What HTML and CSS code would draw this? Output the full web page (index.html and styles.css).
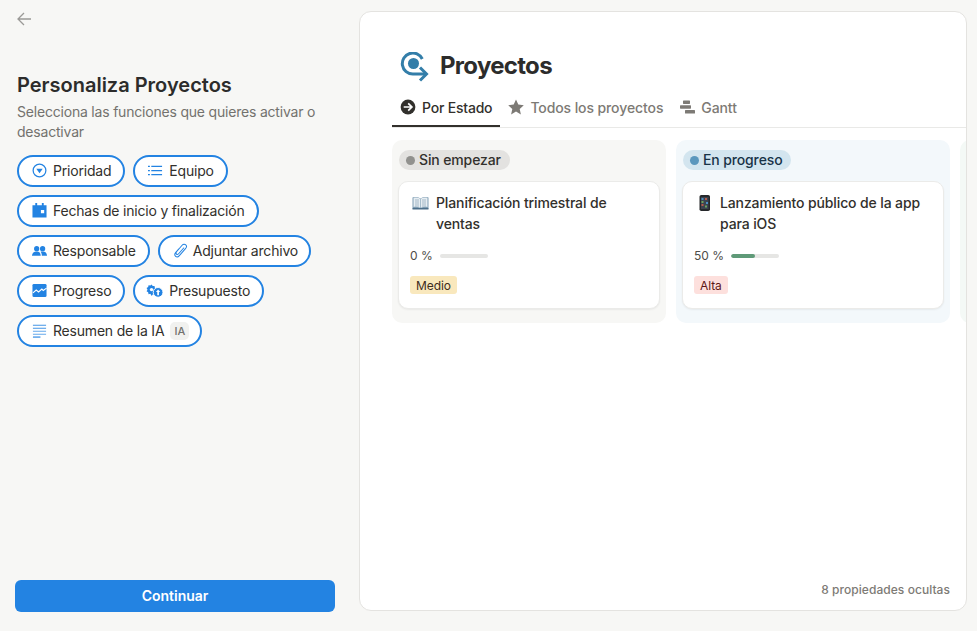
FILE: index.html
```html
<!DOCTYPE html>
<html lang="es">
<head>
<meta charset="utf-8">
<title>Personaliza Proyectos</title>
<link rel="stylesheet" href="styles.css">
</head>
<body>
<div class="app">
  <aside class="side">
    <button class="back" aria-label="Atrás">
      <svg width="16" height="16" viewBox="0 0 16 16" fill="none" stroke="#9b9a97" stroke-width="1.3"><path d="M15 8H2M8 2 2 8l6 6"/></svg>
    </button>
    <h1 class="side-title">Personaliza Proyectos</h1>
    <p class="side-sub">Selecciona las funciones que quieres activar o desactivar</p>
    <div class="chips">
      <span class="chip">
        <svg class="ic" viewBox="0 0 16 16"><circle cx="8" cy="8" r="6.8" fill="none" stroke="#2383e2" stroke-width="1.3"/><path d="M4.600 6h6.800L8 10.800z" fill="#2383e2"/></svg>
        Prioridad</span>
      <span class="chip">
        <svg class="ic" viewBox="0 0 16 16" fill="#2383e2"><path d="M0 3h2v1.300H0zM0 7.400h2v1.300H0zM0 11.800h2v1.300H0zM3.500 3H15v1.300H3.500zM3.500 7.400H15v1.300H3.500zM3.500 11.800H15v1.300H3.500z"/></svg>
        Equipo</span>
      <span class="chip">
        <svg class="ic" viewBox="0 0 16 16"><path fill="#2383e2" fill-rule="evenodd" d="M.5 2.500h3V0h2v2.500h5V0h2v2.500h3V15.500H.5zM9.500 7.500v3.500H13V7.500z"/></svg>
        Fechas de inicio y finalización</span>
      <span class="chip">
        <svg class="ic" viewBox="0 0 16 16" fill="#2383e2"><circle cx="5" cy="6" r="2.800"/><circle cx="11.300" cy="6" r="2.800"/><path d="M0 13.500c0-2.900 2.200-4.500 5-4.500s4.300 1.600 4.300 4.500zM10.500 13.500c0-1.700-.4-3.100-1.400-4.100.8-.3 1.500-.4 2.400-.4 2.600 0 4.500 1.600 4.500 4.500z"/></svg>
        Responsable</span>
      <span class="chip chip-tight">
        <svg class="ic" viewBox="0 0 16 16" fill="none" stroke="#2383e2" stroke-width="1.100" stroke-linecap="round"><path d="M6 6.500 3 10c-1.700 2-1 3.500-.2 4.200s2.500 1 4-.7l6.500-7.500c1.500-1.700 1.200-3.300.3-4.100s-2.600-1-3.900.5L3.800 9.300c-.9 1.100-.6 2-.1 2.500s1.500.6 2.300-.3l5.400-6.200"/></svg>
        Adjuntar archivo</span>
      <span class="chip">
        <svg class="ic" viewBox="0 0 16 16"><rect x=".5" y="1" width="15" height="14" rx="1.500" fill="#2383e2"/><path d="M1 10.500 4.500 7.500l2.500 2L10.500 6.500l1.500 1.500 3.500-2.500" fill="none" stroke="#fff" stroke-width="1.200"/></svg>
        Progreso</span>
      <span class="chip">
        <svg class="ic ic-wide" viewBox="0 0 18 16"><path d="m5.500 1.500 1 1.700 2-.1.300 1.900 1.700.9-.8 1.800.8 1.800-1.700.9-.3 1.900-2-.1-1 1.700L4 11.500l-1.900.4-.4-2L0 8.800l1-1.700-1-1.700 1.700-1.100.4-2L4 2.700z" fill="#2383e2"/><circle cx="5.300" cy="7" r="1.800" fill="#fff"/><circle cx="12.300" cy="10" r="5.200" fill="#2383e2" stroke="#fff" stroke-width="1"/><path d="M12.300 7 10 9.700h1.400V13h1.800V9.700h1.400z" fill="#fff"/></svg>
        Presupuesto</span>
      <span class="chip">
        <svg class="ic" viewBox="0 0 16 16" fill="#2383e2"><path d="M1 1.800h14V3H1zM1 5h14v1.200H1z" opacity=".85"/><path d="M1 8.200h14v1.200H1zM1 11.400h14v1.200H1z" opacity=".7"/><path d="M1 14.400h8v1.200H1z"/></svg>
        Resumen de la IA <em class="ai-tag">IA</em></span>
    </div>
    <button class="continue">Continuar</button>
  </aside>

  <main class="panel">
    <header class="panel-head">
      <svg class="logo" width="30" height="30" viewBox="0 0 30 30" fill="none"><path d="M22.300 7A10.500 10.500 0 1 0 13 22H25.500" stroke="#337ea9" stroke-width="3"/><path d="m20 15.500 6.500 6.500-6.500 6.500" stroke="#337ea9" stroke-width="3"/><circle cx="13.500" cy="11.500" r="5.500" fill="#337ea9"/></svg>
      <h2 class="panel-title">Proyectos</h2>
    </header>
    <nav class="tabs">
      <span class="tab tab-on">
        <svg width="16" height="16" viewBox="0 0 16 16"><circle cx="8" cy="8" r="7.400" fill="#32302c"/><path d="M3.700 8h8M8.200 4.300 11.900 8l-3.700 3.700" fill="none" stroke="#fff" stroke-width="1.700"/></svg>
        Por Estado</span>
      <span class="tab">
        <svg width="16" height="16" viewBox="0 0 16 16"><path d="m8 .5 2.300 5.100 5.500.6-4.100 3.700 1.200 5.500L8 12.600l-4.900 2.800 1.200-5.500L.2 6.200l5.500-.6z" fill="#7d7a75"/></svg>
        Todos los proyectos</span>
      <span class="tab">
        <svg width="16" height="16" viewBox="0 0 16 16" fill="#7d7a75"><rect x="4" y="1.500" width="7" height="3.400" rx=".6"/><rect x="1" y="6.300" width="11" height="3.400" rx=".6"/><rect x="6" y="11.100" width="10" height="3.400" rx=".6"/></svg>
        Gantt</span>
    </nav>
    <section class="board">
      <div class="col col-grey">
        <span class="status status-grey"><i class="dot dot-grey"></i>Sin empezar</span>
        <article class="card">
          <div class="card-title">
            <svg class="emoji" viewBox="0 0 17 16"><path d="M.5 2.500c2.800-.8 5.500-.5 8 1 2.500-1.500 5.200-1.800 8-1v11h-16z" fill="#7f9db3"/><path d="M1.500 2.800c2.500-.5 4.800-.2 6.700 1v9c-1.900-1-4.200-1.200-6.700-.9zM15.500 2.800c-2.500-.5-4.800-.2-6.700 1v9c1.900-1 4.200-1.200 6.700-.9z" fill="#e6edf2"/><path d="M.5 13h16v1.500H.5z" fill="#4d6f8a"/><path d="M3 5h4M3 7h4M3 9h4M3 11h4M10 5h4M10 7h4M10 9h4M10 11h4" stroke="#9db2c2" stroke-width=".9"/></svg>
            <span>Planificación trimestral de ventas</span>
          </div>
          <div class="progress">
            <span>0 %</span><div class="bar"></div>
          </div>
          <span class="tag tag-med">Medio</span>
        </article>
      </div>
      <div class="col col-blue">
        <span class="status status-blue"><i class="dot dot-blue"></i>En progreso</span>
        <article class="card">
          <div class="card-title">
            <svg class="emoji" viewBox="0 0 17 16"><rect x="3.500" y="0" width="10.500" height="16" rx="1.800" fill="#26282b"/><rect x="5" y="2" width="7.500" height="12" fill="#3b4350"/><path d="M5.500 3h2v2h-2zM10 7h2v2h-2z" fill="#4a8fc4"/><path d="M9 3h2v2H9zM5.500 9h2v2h-2z" fill="#b85c4a"/><path d="M5.500 6h2v2h-2zM9 10.500h2v2H9z" fill="#6fa35c"/></svg>
            <span>Lanzamiento público de la app para iOS</span>
          </div>
          <div class="progress">
            <span>50 %</span><div class="bar"><div class="fill" style="width:50%"></div></div>
          </div>
          <span class="tag tag-high">Alta</span>
        </article>
      </div>
      <div class="col col-green"></div>
    </section>
    <footer class="hidden-props">8 propiedades ocultas</footer>
  </main>
</div>
</body>
</html>
```
FILE: styles.css
```css
* { box-sizing: border-box; }
html, body { height: 100%; }
body {
  margin: 0;
  background: #f7f7f5;
  font-family: Inter, "Liberation Sans", sans-serif;
  color: #32302c;
  overflow: hidden;
}
.app {
  display: flex;
  height: 631px;
  padding: 11px 10px 19px 0;
}
.side {
  width: 359px;
  flex: none;
  display: flex;
  flex-direction: column;
  padding: 0 24px 0 15px;
}
.back {
  align-self: flex-start;
  display: flex;
  padding: 0;
  margin-left: 1px;
  border: 0;
  background: none;
  height: 16px;
}
.side-title {
  margin: 45px 0 0 2px;
  font-size: 20px;
  line-height: 26px;
  font-weight: 600;
  color: #2c2c2b;
}
.side-sub {
  margin: 4px 0 0 2px;
  font-size: 14px;
  line-height: 20px;
  letter-spacing: -.2px;
  color: #73726e;
}
.chips {
  display: flex;
  flex-wrap: wrap;
  gap: 8px;
  margin: 13px 0 0 2px;
}
.chip {
  display: inline-flex;
  align-items: center;
  height: 32px;
  padding: 0 12px 1px 13px;
  gap: 6px;
  border: 2px solid #2383e2;
  border-radius: 16px;
  background: #fff;
  font-size: 14px;
  letter-spacing: -.2px;
  color: #32302c;
  white-space: nowrap;
}
.chip-tight { gap: 5px; padding-right: 11px; }
.ic { width: 15px; height: 15px; flex: none; }
.ic-wide { width: 18px; margin-left: -2px; margin-right: -1px; }
.ai-tag {
  font-style: normal;
  font-size: 11px;
  font-weight: 500;
  letter-spacing: 0;
  color: #73726e;
  background: #f1f1ef;
  border-radius: 5px;
  width: 19px;
  height: 18px;
  display: inline-flex;
  align-items: center;
  justify-content: center;
  margin-right: -1px;
}
.continue {
  margin-top: auto;
  height: 32px;
  padding: 0 0 2px;
  border: 0;
  border-radius: 6px;
  background: #2383e2;
  color: #fff;
  font: 600 14px Inter, "Liberation Sans", sans-serif;
}
.panel {
  flex: 1;
  min-width: 0;
  display: flex;
  flex-direction: column;
  position: relative;
  background: #fff;
  border: 1px solid #e4e3e0;
  border-radius: 12px;
  overflow: hidden;
  padding-left: 32px;
  margin-bottom: 1px;
}
.panel-head {
  display: flex;
  align-items: center;
  gap: 10px;
  margin-top: 39px;
  padding-left: 8px;
  height: 30px;
  flex: none;
}
.logo { flex: none; align-self: flex-start; margin-top: 1px; }
.panel-title {
  margin: 0;
  font-size: 24px;
  line-height: 30px;
  font-weight: 700;
  letter-spacing: -.7px;
  color: #2c2c2b;
}
.tabs {
  display: flex;
  flex: none;
  height: 35px;
  margin-top: 12px;
  border-bottom: 1px solid #e9e9e7;
}
.tab {
  display: flex;
  align-items: center;
  gap: 6px;
  height: 34px;
  padding: 0 8px 6px;
  font-size: 14px;
  font-weight: 500;
  letter-spacing: -.1px;
  color: #7d7a75;
  white-space: nowrap;
}
.tab svg { flex: none; }
.tab-on {
  color: #32302c;
  letter-spacing: -.2px;
  padding-bottom: 4px;
  border-bottom: 2px solid #32302c;
}
.board {
  display: flex;
  flex: none;
  gap: 10px;
  margin-top: 12px;
}
.col {
  flex: none;
  width: 274px;
  height: 183px;
  border-radius: 10px;
  padding: 10px 6px 0;
}
.col-grey { background: #f7f7f5; }
.col-blue { background: #f3f8fb; }
.col-green { background: #f4f9f6; }
.status {
  display: flex;
  width: fit-content;
  align-items: center;
  height: 20px;
  padding: 0 9px 0 7px;
  margin-left: 1px;
  gap: 4px;
  border-radius: 10px;
  font-size: 14px;
  line-height: 20px;
  font-weight: 500;
  letter-spacing: -.13px;
}
.status-grey { background: #e3e2e0; color: #32302c; }
.status-blue { background: #d3e5ef; color: #183347; }
.dot { width: 9px; height: 9px; border-radius: 50%; }
.dot-grey { background: #91918e; }
.dot-blue { background: #5b97bd; }
.card {
  margin-top: 11px;
  height: 128px;
  background: #fff;
  border-radius: 10px;
  border: 1px solid #ebebe9;
  box-shadow: 0 1px 2px rgba(0,0,0,.06);
  padding: 10px 11px;
}
.card-title {
  display: flex;
  gap: 7px;
  font-size: 14px;
  line-height: 21px;
  font-weight: 500;
  letter-spacing: -.125px;
  color: #32302c;
}
.emoji { flex: none; margin: 3px 0 0 2px; width: 17px; height: 16px; }
.progress {
  display: flex;
  align-items: center;
  gap: 7px;
  margin-top: 13px;
  font-size: 12px;
  line-height: 18px;
  color: #4e4c48;
}
.bar {
  width: 48px;
  height: 4px;
  border-radius: 2px;
  background: #e6e6e4;
  overflow: hidden;
}
.fill { height: 100%; background: #5f9a78; border-radius: 2px; }
.tag {
  display: flex;
  width: fit-content;
  align-items: center;
  height: 18px;
  margin-top: 11px;
  padding: 0 6px;
  border-radius: 3px;
  font-size: 12px;
  letter-spacing: -.1px;
}
.tag-med { background: #f9e8bd; color: #402c1b; }
.tag-high { background: #fde0dd; color: #5d1715; }
.hidden-props {
  position: absolute;
  right: 16px;
  bottom: 12px;
  font-size: 12px;
  line-height: 16px;
  font-weight: 500;
  letter-spacing: .05px;
  color: #7d7a75;
}
```
